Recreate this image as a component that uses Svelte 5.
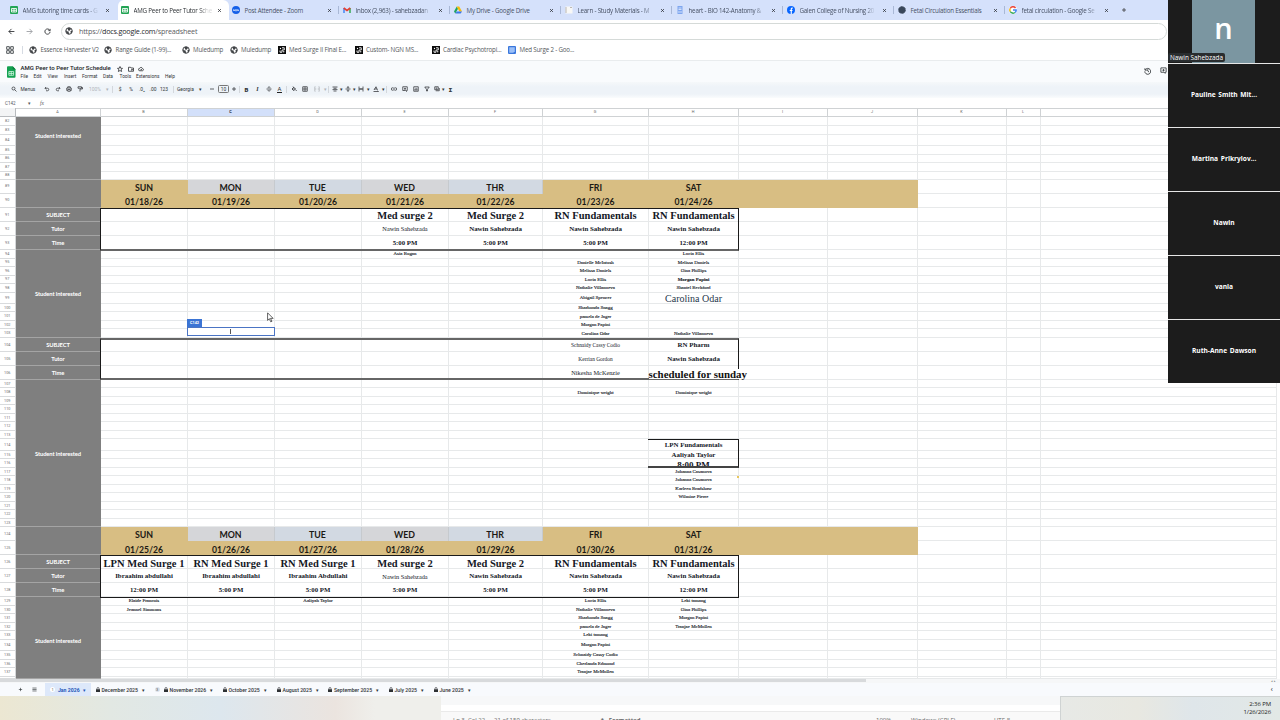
<script lang="ts">
  type Cell = { row: number; col: number; text: string; kind: string };

  const FIRST_ROW = 82;
  const COLUMNS = ['A', 'B', 'C', 'D', 'E', 'F', 'G', 'H', 'I', 'J', 'K', 'L', ''];
  const TALL = [91, 92, 93, 104, 105, 106, 124, 125, 126, 127, 128];
  const MEDIUM = [84, 99, 114, 134];

  const tabs = [
    { icon: 'sheet', title: 'AMG tutoring time cards - G' },
    { icon: 'sheet', title: 'AMG Peer to Peer Tutor Sche' },
    { icon: 'zoom', title: 'Post Attendee - Zoom' },
    { icon: 'gmail', title: 'Inbox (2,963) - sahebzadan' },
    { icon: 'drive', title: 'My Drive - Google Drive' },
    { icon: 'learn', title: 'Learn - Study Materials - M' },
    { icon: 'docblue', title: 'heart - BIO 142-Anatomy &' },
    { icon: 'facebook', title: 'Galen College of Nursing 20' },
    { icon: 'spiky', title: 'Fetal Circulation Essentials' },
    { icon: 'google', title: 'fetal circulation - Google Se' },
  ];

  const bookmarks = [
    { icon: 'globe', title: 'Essence Harvester V2', w: 75 },
    { icon: 'globe', title: 'Range Guide (1-99)...', w: 77.5 },
    { icon: 'globe', title: 'Muledump', w: 48 },
    { icon: 'globe', title: 'Muledump', w: 48 },
    { icon: 'square', title: 'Med Surge II Final E...', w: 77 },
    { icon: 'square', title: 'Custom- NGN MS...', w: 77 },
    { icon: 'square', title: 'Cardiac Psychotropi...', w: 76.5 },
    { icon: 'note', title: 'Med Surge 2 - Goo...', w: 76 },
  ];

  const menus = [
    ['File', 13],
    ['Edit', 14],
    ['View', 16.5],
    ['Insert', 18],
    ['Format', 21],
    ['Data', 16.5],
    ['Tools', 16.5],
    ['Extensions', 29],
    ['Help', 14],
  ] as [string, number][];

  // [type, value, slot width]
  const tools = [
    ['icon', 'search', 12],
    ['text', 'Menus', 16],
    ['gap', '', 5.5],
    ['icon', 'undo', 11],
    ['icon', 'redo', 11],
    ['icon', 'print', 11],
    ['icon', 'paint', 11],
    ['faded', '100%', 19],
    ['faded', '▾', 5],
    ['sep', '', 5],
    ['text', '$', 11],
    ['text', '%', 11],
    ['text', '.0₊', 11],
    ['text', '.00', 11],
    ['text', '123', 11],
    ['sep', '', 7],
    ['text', 'Georgia', 18],
    ['text', '▾', 11],
    ['icon', 'minus', 12],
    ['box', '10', 12],
    ['icon', 'plus', 9],
    ['sep', '', 2.5],
    ['bold', 'B', 11],
    ['italic', 'I', 11],
    ['icon', 'strike', 11],
    ['under', 'A', 11],
    ['sep', '', 3],
    ['icon', 'fill', 11],
    ['icon', 'borders', 12],
    ['iconfaded', 'merge', 12],
    ['faded', '▾', 4],
    ['sep', '', 3],
    ['icon', 'align', 9],
    ['text', '▾', 4],
    ['icon', 'valign', 9],
    ['text', '▾', 4],
    ['icon', 'wrap', 10],
    ['text', '▾', 4],
    ['icon', 'rotate', 11],
    ['text', '▾', 4],
    ['sep', '', 3],
    ['icon', 'link', 11],
    ['icon', 'comment', 11],
    ['icon', 'chart', 11],
    ['icon', 'filter', 11],
    ['icon', 'views', 9],
    ['text', '▾', 4],
    ['bold', 'Σ', 11],
  ] as [string, string, number][];

  const PATHS: Record<string, string> = {
    search: 'M8 5a3 3 0 1 1-6 0a3 3 0 0 1 6 0M7.3 7.3L11 11',
    undo: 'M4 2L2 4.5L4.5 7M2 4.5h5a2.5 2.5 0 0 1 0 5H4',
    redo: 'M8 2l2 2.5L7.500 7M10 4.500H5a2.500 2.500 0 0 0 0 5h3',
    print: 'M3.500 4V1.500h5V4M3 9H1.500V4h9v5H9M3.500 7h5v3.500h-5z',
    paint: 'M2 1.500h7v3H2zM9 3h2v3H6v5',
    minus: 'M2 6h8',
    plus: 'M2 6h8M6 2v8',
    strike: 'M1 6h10M8.500 3.500C8 1 3.500 1.500 4 4M3.500 8c.5 3 5.500 2.500 5-.5',
    fill: 'M4 1l5 5-3.500 3.500L2 6l4-4M2 6h7M10.500 8v2',
    borders: 'M1.500 1.500h9v9h-9zM6 1.500v9M1.500 6h9',
    merge: 'M3 1.500H1.500v9H3M9 1.500h1.500v9H9M1.500 6h3M10.500 6h-3',
    align: 'M1 2h10M3 4.600h6M1 7.200h10M3 10h6',
    valign: 'M1 6h10M6 0v4M4 2.500L6 4.500l2-2M6 12V8M4 9.500L6 7.500l2 2',
    wrap: 'M2 1v10M10 1v10M3 6h6M7 4l2 2-2 2M5 4L3 6l2 2',
    rotate: 'M2 8L6 1.500 9 8M3 6h5M1 11h10M9 9.500l2 1.500',
    link: 'M5 3.500H3a2.500 2.500 0 0 0 0 5h2M7 3.500h2a2.500 2.500 0 0 1 0 5H7M4 6h4',
    comment: 'M1.500 1.500h9V9H9v2L7 9H1.500zM6 3.500v4M4 5.500h4',
    chart: 'M1.500 1.500h9v9h-9zM4 9V6M6 9V3.500M8 9V5',
    filter: 'M1.500 2h9L7 6.500V10H5V6.500z',
    views: 'M1.500 1.500h7v6h-7zM3.500 9.500h7V4M3.500 4h3M3.500 6h3',
    star: 'M6 1l1.500 3.500 3.500.3-2.700 2.400.9 3.800L6 9l-3.200 2 .9-3.800L1 4.800l3.500-.3z',
    folder: 'M1 2.500h4L6 4h5v6.500H1zM6 7.500h3M7.500 6l1.500 1.500L7.500 9',
    cloud: 'M3.500 9.500a2.500 2.500 0 0 1 0-5a3 3 0 0 1 5.500.5a2.300 2.300 0 0 1 0 4.500zM4.500 7l1.200 1.200L8 6',
    back: 'M11 6H1.500M6 1.500L1.500 6 6 10.500',
    forward: 'M1 6h9.500M6 1.500L10.500 6 6 10.500',
    reload: 'M10 4A4.500 4.500 0 1 0 10.500 6.500M10.500 1.500V4.500H7.500',
    history: 'M1.500 2v3h3M2 4.500A4.700 4.700 0 1 1 1.300 7M6 3.500V6.500l2 1.500',
    close: 'M2.500 2.500l7 7M9.500 2.500l-7 7',
    apps: 'M1 1h4v4H1zM7 1h4v4H7zM1 7h4v4H1zM7 7h4v4H7z',
    menu: 'M1 2.500h10M1 6h10M1 9.500h10',
  };

  const height = (row: number) => {
    if (row === 82) return 9;
    if (row === 90) return 14.5;
    if (row === 89) return 13.5;
    if (row === 138) return 1.9;
    if (TALL.includes(row)) return 14;
    if (MEDIUM.includes(row)) return 11.4;
    return 8.5;
  };

  const rows = Array.from({ length: 57 }, (_, i) => FIRST_ROW + i);
  const rowTemplate = '9.2px ' + rows.map((r) => `${height(r)}px`).join(' ');

  // Grid line of a sheet row and column; line 1 holds the headers
  const area = (row: number, col: number, rowSpan = 1, colSpan = 1) =>
    `grid-area: ${row - FIRST_ROW + 2} / ${col + 1} / span ${rowSpan} / span ${colSpan}`;

  const labels = [
    { row: 82, span: 7, text: 'Student interested', kind: 'early' },
    { row: 89, span: 2, text: '' },
    { row: 91, span: 1, text: 'SUBJECT' },
    { row: 92, span: 1, text: 'Tutor' },
    { row: 93, span: 1, text: 'Time' },
    { row: 94, span: 10, text: 'Student interested' },
    { row: 104, span: 1, text: 'SUBJECT' },
    { row: 105, span: 1, text: 'Tutor' },
    { row: 106, span: 1, text: 'Time' },
    { row: 107, span: 17, text: 'Student interested' },
    { row: 124, span: 2, text: '' },
    { row: 126, span: 1, text: 'SUBJECT' },
    { row: 127, span: 1, text: 'Tutor' },
    { row: 128, span: 1, text: 'Time' },
    { row: 129, span: 10, text: 'Student interested', kind: 'late' },
  ];

  const weeks = [
    { row: 89, dates: ['01/18/26', '01/19/26', '01/20/26', '01/21/26', '01/22/26', '01/23/26', '01/24/26'] },
    { row: 124, dates: ['01/25/26', '01/26/26', '01/27/26', '01/28/26', '01/29/26', '01/30/26', '01/31/26'] },
  ];
  const DAYS = ['SUN', 'MON', 'TUE', 'WED', 'THR', 'FRI', 'SAT'];

  const session = (row: number, col: number, subject: string, tutor: string, time: string, tutorKind = 'tutor'): Cell[] => [
    { row, col, text: subject, kind: 'subject' },
    { row: row + 1, col, text: tutor, kind: tutorKind },
    { row: row + 2, col, text: time, kind: 'time' },
  ];

  const names = (row: number, col: number, list: string[]): Cell[] =>
    list.map((text, i) => ({ row: row + i, col, text, kind: 'name' }));

  const cells: Cell[] = [
    ...session(91, 5, 'Med surge 2', 'Nawin Sahebzada', '5:00 PM', 'light'),
    ...session(91, 6, 'Med Surge 2', 'Nawin Sahebzada', '5:00 PM'),
    ...session(91, 7, 'RN Fundamentals', 'Nawin Sahebzada', '5:00 PM'),
    ...session(91, 8, 'RN Fundamentals', 'Nawin Sahebzada', '12:00 PM'),
    ...names(94, 5, ['Asia Bogan']),
    ...names(95, 7, [
      'Danielle McIntosh', 'Melissa Daniels', 'Lucia Ellis', 'Nathalie Villanueva', 'Abigail Spencer',
      'Sharhonda Snagg', 'pamela de Jager', 'Morgan Papini', 'Carolina Odar',
    ]),
    ...names(94, 8, ['Lucia Ellis', 'Melissa Daniels', 'Gina Phillips']),
    { row: 97, col: 8, text: 'Morgan Papini', kind: 'name strong' },
    ...names(98, 8, ['Shantel Beckford']),
    { row: 99, col: 8, text: 'Carolina Odar', kind: 'large' },
    ...names(103, 8, ['Nathalie Villanueva']),
    { row: 104, col: 7, text: 'Schnaidy Cassy Codio', kind: 'mid' },
    { row: 105, col: 7, text: 'Kerrian Gordon', kind: 'mid' },
    { row: 106, col: 7, text: 'Nikesha McKenzie', kind: 'light' },
    { row: 104, col: 8, text: 'RN Pharm', kind: 'tutor' },
    { row: 105, col: 8, text: 'Nawin Sahebzada', kind: 'tutor' },
    { row: 106, col: 8, text: 'scheduled for sunday', kind: 'spill' },
    ...names(108, 7, ['Dominique wright']),
    ...names(108, 8, ['Dominique wright']),
    { row: 114, col: 8, text: 'LPN Fundamentals', kind: 'tutor' },
    { row: 115, col: 8, text: 'Aaliyah Taylor', kind: 'tutor' },
    { row: 116, col: 8, text: '8:00 PM', kind: 'cropped' },
    ...names(117, 8, ['Johanna Casanova', 'Johanna Casanova', 'Karleen Bradshaw', 'Wilmine Pierre']),
    ...session(126, 2, 'LPN Med Surge 1', 'Ibraahim abdullahi', '12:00 PM'),
    ...session(126, 3, 'RN Med Surge 1', 'Ibraahim abdullahi', '5:00 PM'),
    ...session(126, 4, 'RN Med Surge 1', 'Ibraahim Abdullahi', '5:00 PM'),
    ...session(126, 5, 'Med surge 2', 'Nawin Sahebzada', '5:00 PM', 'light'),
    ...session(126, 6, 'Med Surge 2', 'Nawin Sahebzada', '5:00 PM'),
    ...session(126, 7, 'RN Fundamentals', 'Nawin Sahebzada', '5:00 PM'),
    ...session(126, 8, 'RN Fundamentals', 'Nawin Sahebzada', '12:00 PM'),
    ...names(129, 2, ['Elaide Francois', 'Jeannel Simmons']),
    ...names(129, 4, ['Aaliyah Taylor']),
    ...names(129, 7, [
      'Lucia Ellis', 'Nathalie Villanueva', 'Sharhonda Snagg', 'pamela de Jager', 'Leki tamang',
      'Morgan Papini', 'Schnaidy Cassy Codio', 'Cherlanda Edmond', 'Tranjae McMullen',
    ]),
    ...names(129, 8, ['Leki tamang', 'Gina Phillips', 'Morgan Papini', 'Tranjae McMullen']),
  ];

  const sheets = [
    { title: 'December 2025', w: 59 },
    { title: 'November 2026', w: 68, badge: '3' },
    { title: 'October 2025', w: 54 },
    { title: 'August 2025', w: 51.5 },
    { title: 'September 2025', w: 60.5 },
    { title: 'July 2025', w: 45 },
    { title: 'June 2025', w: 45 },
  ];

  const people = ['Pauline Smith Mit...', 'Martina Prikrylov...', 'Nawin', 'vania', 'Ruth-Anne Dawson'];
</script>

{#snippet icon(name: string)}
  <svg class="icon" viewBox="0 0 12 12"><path d={PATHS[name]} /></svg>
{/snippet}

{#snippet logo(name: string)}
  <svg class="logo" viewBox="0 0 16 16">
    {#if name === 'sheet'}
      <rect width="16" height="16" rx="2" fill="#23a455" />
      <path d="M3 5h10v7H3zM3 8.500h10M8 5v7" fill="none" stroke="#fff" stroke-width="1.700" />
    {:else if name === 'zoom'}
      <circle cx="8" cy="8" r="8" fill="#1560e8" />
      <path d="M3 10V7l2 3V7M7 7h2v3H7zM11 10V7l2 3V7" fill="none" stroke="#fff" />
    {:else if name === 'gmail'}
      <path d="M2 14V4" stroke="#4285f4" stroke-width="3" />
      <path d="M14 14V4" stroke="#34a853" stroke-width="3" />
      <path d="M1.500 4L8 9l6.500-5" fill="none" stroke="#e53e30" stroke-width="3.200" />
    {:else if name === 'drive'}
      <path d="M5.500 1L0 11l2.700 4L8 5.500z" fill="#1ea362" />
      <path d="M5.500 1h5L16 11h-5.300z" fill="#fbbc04" />
      <path d="M5.500 11H16l-2.700 4H2.700z" fill="#3b78e7" />
    {:else if name === 'learn'}
      <path d="M1 1h14v14H1z" fill="#f8f8f6" />
      <path d="M2 2v12M10 3h4" stroke="#aaa49c" stroke-width="1.500" />
    {:else if name === 'docblue'}
      <path d="M3 0h10v16H3z" fill="#7ea6ef" />
      <path d="M5 4h6M5 7h6M4 12h8" stroke="#eff4ff" stroke-width="1.500" />
    {:else if name === 'facebook'}
      <circle cx="8" cy="8" r="8" fill="#0866ff" />
      <path d="M8.500 16V6.500c0-2 1-2.500 3-2.300M5.500 9h5.500" fill="none" stroke="#fff" stroke-width="2.300" />
    {:else if name === 'spiky'}
      <circle cx="8" cy="8" r="6.500" fill="#39475a" />
      <circle cx="8" cy="8" r="7" fill="none" stroke="#39475a" stroke-width="2" stroke-dasharray="2 1" />
    {:else if name === 'google'}
      <circle cx="8" cy="8" r="8" fill="#fff" />
      <g fill="none" stroke-width="3">
        <path d="M13 4A6.400 6.400 0 0 0 2.500 5" stroke="#ea4335" />
        <path d="M2.500 5a6.400 6.400 0 0 0 0 6" stroke="#fbbc04" />
        <path d="M2.500 11a6.400 6.400 0 0 0 9.500 2" stroke="#34a853" />
        <path d="M12 13c2-1.500 2.500-3 2.300-5H8" stroke="#4285f4" />
      </g>
    {:else if name === 'globe'}
      <circle cx="8" cy="8" r="6.500" fill="#fff" stroke="#3f4245" stroke-width="2" />
      <path d="M2 6.500l3.500 2.500h2v2.500l1 3-3-.5-3-3zM5 2l4-.5 4 2.500-2.500 1.500L8.500 8 6 6.500zM11 8l3.500-.5-.5 4-2.500 1z" fill="#3f4245" />
    {:else if name === 'square'}
      <path d="M0 0h16v16H0z" fill="#0c0c0c" />
      <path d="M8 3.500h4.500v4.500H8v4.500H4V9" fill="none" stroke="#fff" stroke-width="1.800" />
      <circle cx="11.500" cy="11.500" r="1.300" fill="#fff" />
      <circle cx="5" cy="5" r="1.300" fill="#fff" />
    {:else if name === 'note'}
      <rect width="16" height="16" rx="2" fill="#3a77dc" />
      <path d="M2.500 2.500h11v8l-3 3h-8z" fill="#9cc0f8" />
    {/if}
  </svg>
{/snippet}

<main>
  <div class="tabs">
    {#each tabs as tab, i}
      <div class="tab" class:active={i === 1} class:divided={i > 2}>
        {@render logo(tab.icon)}
        <span class="tab-title" class:long={tab.title.length > 23 && i !== 8}>{tab.title}</span>
        {@render icon('close')}
      </div>
    {/each}
    <div class="new-tab">{@render icon('plus')}</div>
  </div>

  <div class="address">
    {@render icon('back')}
    <span class="dim">{@render icon('forward')}</span>
    {@render icon('reload')}
    <div class="url">{@render logo('globe')}<span>https://<b>docs.google.com</b>/spreadsheet</span></div>
  </div>

  <div class="bookmarks">
    <div class="apps">{@render icon('apps')}</div>
    {#each bookmarks as mark}
      <div class="bookmark" style="width: {mark.w}px">{@render logo(mark.icon)}<span>{mark.title}</span></div>
    {/each}
  </div>

  <header>
    <svg class="sheets-logo" viewBox="0 0 18 24">
      <path d="M2 0h10l6 6v16a2 2 0 0 1-2 2H2a2 2 0 0 1-2-2V2a2 2 0 0 1 2-2z" fill="#12a150" />
      <path d="M12 0l6 6h-6z" fill="#0b7c3c" />
      <path d="M4 11h10v8H4zM4 15h10M9 11v8" fill="none" stroke="#e4fff0" stroke-width="1.500" />
    </svg>
    <div class="heading">
      <div class="doc-title">
        <span>AMG Peer to Peer Tutor Schedule</span>
        {@render icon('star')}
        {@render icon('folder')}
        {@render icon('cloud')}
      </div>
      <div class="menus">
        {#each menus as [menu, w]}
          <span style="width: {w}px">{menu}</span>
        {/each}
      </div>
    </div>
    <div class="history">{@render icon('history')}</div>
    <div class="comments">{@render icon('comment')}</div>
  </header>

  <div class="toolbar">
    {#each tools as [type, value, w]}
      <div class="tool {type}" style="width: {w}px">
        {#if type.startsWith('icon')}
          {@render icon(value)}
        {:else if value}
          <span>{value}</span>
        {/if}
      </div>
    {/each}
  </div>

  <div class="formula"><span>C142</span><span>▾</span><i>fx</i></div>

  <div class="sheet" style="grid-template-rows: {rowTemplate}">
    <div class="corner"></div>
    {#each COLUMNS as name, i}
      <div class="col-head" class:picked={name === 'C'} style={area(81, i + 1)}>{name}</div>
    {/each}

    {#each rows as row}
      <div class="row-head" style={area(row, 0)}>{row < 138 ? row : ''}</div>
      {#each COLUMNS as _, i}
        {#if i > 0}
          <div class="blank" style={area(row, i + 1)}></div>
        {/if}
      {/each}
    {/each}

    {#each labels as label}
      <div class="label {label.kind ?? ''}" style={area(label.row, 1, label.span)}>{label.text}</div>
    {/each}

    {#each weeks as week}
      <div class="band" style={area(week.row, 2, 2, 9)}></div>
      {#each week.dates as date, i}
        <div class="day" class:weekday={i > 0 && i < 5} class:blue={i === 2 || i === 4} style={area(week.row, i + 2)}>
          {DAYS[i]}
        </div>
        <div class="day date" style={area(week.row + 1, i + 2)}>{date}</div>
      {/each}
    {/each}

    <div class="frame first" style={area(91, 2, 3, 7)}></div>
    <div class="frame second" style={area(104, 2, 3, 7)}></div>
    <div class="frame third" style={area(114, 8, 3, 1)}></div>
    <div class="frame" style={area(126, 2, 3, 7)}></div>

    {#each cells as cell}
      <div class="cell {cell.kind}" style={area(cell.row, cell.col)}><span>{cell.text}</span></div>
    {/each}

    <div class="marker" style={area(117, 8)}></div>
    <div class="editing" style={area(103, 3)}>
      <span class="tag">C142</span>
      <span class="caret"></span>
    </div>
  </div>

  <div class="scroll"><div class="thumb"></div><span>◂ ▸</span></div>

  <div class="sheet-tabs">
    <div class="add">{@render icon('plus')}</div>
    <div class="all">{@render icon('menu')}</div>
    <div class="current"><i>1</i><b>Jan 2026</b><span>▾</span></div>
    {#each sheets as sheet}
      <div class="sheet-tab" style="width: {sheet.w}px">
        {#if sheet.badge}<i>{sheet.badge}</i>{/if}
        <svg class="lock" viewBox="0 0 8 10">
          <path d="M2 5V3a2 2 0 0 1 4 0v2" fill="none" stroke="#2d3033" stroke-width="1.300" />
          <path d="M0 4.500h8V10H0z" fill="#2d3033" />
        </svg>
        <span>{sheet.title}</span>
        <span class="arrow">▾</span>
      </div>
    {/each}
    <div class="collapse">‹</div>
  </div>

  <footer>
    <div class="task-left"></div>
    <div class="status">
      <span class="pos">Ln 3, Col 22</span>
      <span class="chars">21 of 159 characters</span>
      <span class="format">⁂ &nbsp;Formatted</span>
      <span class="percent">100%</span>
      <span class="ending">Windows (CRLF)</span>
      <span>UTF-8</span>
    </div>
    <div class="clock"><span>2:36 PM</span><span>1/26/2026</span></div>
  </footer>

  <aside>
    <div class="person speaker">
      <div class="avatar">n</div>
      <span class="speaker-name">Nawin Sahebzada</span>
    </div>
    {#each people as person}
      <div class="person">{person}</div>
    {/each}
  </aside>

  <svg class="pointer" viewBox="0 0 12 18">
    <path d="M1 1v13l3-3 2.500 5.500 2-1L6 10.500h4.500z" fill="#fff" stroke="#333" stroke-width="1.300" />
  </svg>
</main>

<style>
  :global(body) {
    overflow: hidden;
  }

  main {
    position: relative;
    width: 1280px;
    height: 720px;
    overflow: hidden;
    display: flex;
    flex-direction: column;
    background: #fff;
    color: #3c4043;
    font-family: 'Open Sans', 'Noto Sans', sans-serif;
    font-size: 6.2px;
    white-space: nowrap;
  }

  main > * {
    flex-shrink: 0;
    box-sizing: border-box;
  }

  .icon {
    display: block;
    width: 6px;
    height: 6px;
    fill: none;
    stroke: currentColor;
    stroke-width: 1.5;
    flex-shrink: 0;
  }

  .logo {
    display: block;
    width: 8px;
    height: 8px;
    flex-shrink: 0;
  }

  .tabs {
    height: 20px;
    padding-left: 7px;
    display: flex;
    background: #d5e1fb;
    letter-spacing: -0.19px;
  }

  .tab {
    box-sizing: border-box;
    position: relative;
    width: 111px;
    height: 20px;
    padding: 0 7px 0 3px;
    display: flex;
    align-items: center;
    gap: 4.5px;
    color: #465063;
  }

  .tab .icon {
    width: 5px;
    height: 5px;
    color: #30343a;
    stroke-width: 1.9;
    margin-right: 1px;
  }

  .tab-title {
    flex: 1;
  }

  .long {
    mask-image: linear-gradient(to right, #000 84%, rgba(0, 0, 0, 0.2) 94%);
  }

  .tab.active {
    background: #fff;
    border-radius: 6px 6px 0 0;
    color: #2c3034;
  }

  .divided::before {
    content: '';
    position: absolute;
    left: -2px;
    top: 6px;
    width: 1px;
    height: 8px;
    background: #a9b8d6;
  }

  .new-tab {
    padding: 7px 4px;
    color: #333;
  }

  .address {
    height: 22px;
    padding-left: 8px;
    display: flex;
    align-items: center;
    gap: 11px;
    color: #303236;
  }

  .address .icon {
    width: 7px;
    height: 7px;
  }

  .dim {
    color: #9a9da1;
  }

  .url {
    box-sizing: border-box;
    width: 1106px;
    height: 17px;
    margin-left: -1px;
    padding-left: 3px;
    border: 1px solid #d5dad8;
    border-radius: 9px;
    display: flex;
    align-items: center;
    gap: 6px;
    font-size: 7.2px;
    letter-spacing: -0.19px;
    color: #5c6064;
  }

  .url b {
    font-weight: 500;
    color: #25282b;
  }

  .bookmarks {
    height: 19px;
    padding: 0 0 3px 6px;
    display: flex;
    align-items: center;
    border-bottom: 1px solid #e9ecee;
    color: #54585c;
    letter-spacing: -0.17px;
  }

  .apps {
    box-sizing: border-box;
    width: 17px;
    height: 8px;
    margin-right: 6px;
    border-right: 1px solid #d6dbe3;
  }

  .apps .icon {
    width: 8px;
    height: 8px;
  }

  .bookmark {
    display: flex;
    align-items: center;
    gap: 3.5px;
  }

  header {
    height: 21px;
    padding: 4px 0 0 7px;
    display: flex;
    background: #f9fbfd;
    font-family: Roboto, sans-serif;
  }

  .sheets-logo {
    width: 8.5px;
    height: 12px;
    margin: 0.5px 5px 0 0;
  }

  .heading {
    width: 1123px;
  }

  .doc-title {
    height: 7px;
    display: flex;
    align-items: center;
    gap: 4.5px;
    font-size: 6.05px;
    color: #202326;
  }

  .doc-title span {
    width: 91px;
    line-height: 6px;
    margin-top: -1px;
    font-weight: 500;
  }

  .doc-title span + .icon {
    margin-left: 1px;
  }

  .menus {
    display: flex;
    padding-top: 1px;
    font-size: 4.8px;
    line-height: 7px;
    color: #303236;
  }

  .history .icon {
    width: 7.5px;
    height: 7.5px;
    margin-top: 2px;
  }

  .comments .icon {
    width: 7px;
    height: 7px;
    margin: 2px 0 0 9px;
  }

  .toolbar {
    height: 16px;
    padding: 0 0 1.5px 8px;
    display: flex;
    align-items: center;
    background: linear-gradient(#f5f8fa, #eef3f8 30%, #eef3f8 75%, #fafcfd);
    font-family: Roboto, sans-serif;
    font-size: 4.9px;
    color: #303337;
  }

  .tool {
    display: flex;
    align-items: center;
    justify-content: center;
  }

  .tool .icon {
    width: 6px;
    height: 6px;
  }

  .faded,
  .iconfaded {
    color: #b0b4b8;
  }

  .sep::after {
    content: '';
    width: 1px;
    height: 7px;
    background: #d3d7dc;
  }

  .box span {
    padding: 0 2px;
    border: 1px solid #777;
    border-radius: 1.5px;
    line-height: 6px;
  }

  .bold {
    font-weight: 900;
    font-size: 6px;
  }

  .italic {
    font: italic bold 6px 'Liberation Serif', serif;
  }

  .under span {
    padding: 0 1px;
    font-size: 6px;
    line-height: 6px;
    border-bottom: 1px solid #222;
  }

  .formula {
    height: 10px;
    padding-left: 5px;
    display: flex;
    align-items: center;
    font: 4.5px Roboto, sans-serif;
    color: #55595d;
  }

  .formula span:first-child {
    width: 23px;
  }

  .formula i {
    margin-left: 9px;
    font-family: 'Liberation Serif', serif;
    font-size: 5.5px;
  }

  .sheet {
    height: 571px;
    overflow: hidden;
    display: grid;
    grid-template-columns: 15.5px 85px 87px 87px 87px 87px 94px 106px 90px 89px 90px 89px 34px 236px;
    font-family: 'Liberation Serif', serif;
    color: #14181f;
  }

  .sheet > div {
    box-sizing: border-box;
    min-width: 0;
    min-height: 0;
  }

  .corner {
    background: #f3f4f5;
    border-right: 1px solid #b8bbbe;
    border-bottom: 1px solid #b8bbbe;
  }

  .col-head {
    border: solid #cfd2d4;
    border-width: 1px 1px 1px 0;
    font: 3.8px/6px Roboto, sans-serif;
    text-align: center;
    color: #666;
  }

  .picked {
    background: #d3e0fa;
    font-weight: bold;
    color: #223;
  }

  .row-head {
    display: flex;
    align-items: center;
    justify-content: center;
    border-right: 1px solid #d5d7d9;
    border-bottom: 1px solid #d9dbdd;
    font: 3.8px/1 Roboto, sans-serif;
    color: #6b6e71;
  }

  .blank {
    border-right: 1px solid #e7e9ea;
    border-bottom: 1px solid #e7e9ea;
  }

  .label {
    display: flex;
    align-items: center;
    justify-content: center;
    background: #7f7f7f;
    border-bottom: 1px solid #a4a4a4;
    font: bold 5.8px Lato, sans-serif;
    letter-spacing: -0.1px;
    color: #fff;
  }

  .early {
    padding-bottom: 25px;
  }

  .late {
    padding-top: 5px;
  }

  .band {
    background: #d8be83;
  }

  .day {
    display: flex;
    align-items: center;
    justify-content: center;
    padding-top: 3px;
    font: bold 8.8px/1 Lato, sans-serif;
    color: #1b1914;
  }

  .date {
    font-size: 8.6px;
  }

  .weekday {
    background: #d5d6d9;
    border-right: 1px solid #c6cace;
  }

  .weekday.blue {
    background: #d2d9e2;
  }

  .frame {
    z-index: 1;
    border: 1.5px solid #1a1a1a;
    margin: 0 0 -0.5px -0.5px;
  }

  .first {
    border-bottom: 2px solid #666;
  }

  .second {
    border-top: 2px solid #666;
    border-bottom: 2px solid #666;
  }

  .third {
    border-left: 0;
    border-bottom: 2px solid #444;
  }

  .cell {
    display: flex;
    align-items: center;
    justify-content: center;
    line-height: 1;
  }

  .subject {
    padding-top: 3px;
    font-size: 10.5px;
    font-weight: bold;
  }

  .tutor {
    font-size: 6.9px;
    font-weight: bold;
    padding-top: 1px;
  }

  .time {
    padding-top: 1px;
    font-size: 6.8px;
    font-weight: bold;
  }

  .light {
    font-size: 6.3px;
    padding-top: 1px;
  }

  .mid {
    padding-top: 1px;
    font-size: 5.4px;
  }

  .name {
    padding-top: 0.5px;
    font-size: 4.9px;
    -webkit-text-stroke: 0.12px currentColor;
  }

  .strong {
    font-weight: bold;
  }

  .large {
    padding-top: 2px;
    font-size: 10px;
    color: #27374b;
  }

  .spill {
    z-index: 2;
    justify-content: flex-start;
    padding-top: 2px;
    font-size: 10.9px;
    font-weight: bold;
    color: #111;
  }

  .spill span {
    background: #fff;
    line-height: 10px;
  }

  .cropped {
    padding-top: 3px;
    font-size: 9px;
    font-weight: bold;
  }

  .marker {
    justify-self: end;
    width: 2px;
    height: 2px;
    margin-top: 8px;
    background: #e8c65c;
  }

  .editing {
    position: relative;
    z-index: 3;
    margin: -2px 0 2px -0.5px;
    border: 1px solid #4a74c4;
    background: #fff;
  }

  .tag {
    position: absolute;
    left: -1px;
    bottom: 8px;
    padding: 0 3px;
    background: #3b74d4;
    color: #fff;
    font: bold 3.8px/8px Roboto, sans-serif;
  }

  .caret {
    display: block;
    width: 1px;
    height: 5px;
    margin: 0.5px auto;
    background: #555;
  }

  .scroll {
    height: 4px;
    display: flex;
    justify-content: space-between;
    background: #f6f7f8;
    font-size: 3px;
    line-height: 4px;
    color: #777;
  }

  .scroll span {
    padding-right: 4px;
  }

  .thumb {
    width: 866px;
    height: 3px;
    background: #d8dadc;
  }

  .sheet-tabs {
    height: 13px;
    padding-left: 18px;
    display: flex;
    align-items: stretch;
    background: #f8fafd;
    font-family: Roboto, sans-serif;
    font-size: 5.15px;
    color: #2f3336;
  }

  .sheet-tabs > div {
    display: flex;
    align-items: center;
  }

  .sheet-tabs .icon {
    width: 5px;
    height: 5px;
  }

  .add {
    width: 13.5px;
  }

  .all {
    width: 13.5px;
  }

  .current {
    box-sizing: border-box;
    width: 45.5px;
    padding-left: 5px;
    gap: 3px;
    background: #dde8fa;
    color: #2456b8;
  }

  .sheet-tabs i {
    width: 5px;
    height: 5px;
    border-radius: 50%;
    background: #fff;
    font-size: 4px;
    line-height: 5px;
    font-style: normal;
    text-align: center;
    color: #555;
  }

  .sheet-tab {
    gap: 2px;
  }

  .current + .sheet-tab {
    margin-left: 5px;
  }

  .sheet-tab span:not(.arrow) {
    font-weight: 500;
  }

  .sheet-tab i {
    background: #dbe1ea;
    margin-right: 2px;
  }

  .lock {
    width: 4px;
    height: 5px;
  }

  .arrow {
    margin-left: 2px;
  }

  .collapse {
    margin-left: auto;
    padding-right: 7px;
    font-size: 8px;
  }

  footer {
    height: 24px;
    display: flex;
    color: #333;
  }

  .task-left {
    width: 441px;
    background: linear-gradient(to right, #ece7d2, #e2e8e3 25%, #dde7ee 50%, #ebe4df 76%, #efefeb 85%);
  }

  .status {
    box-sizing: border-box;
    width: 619px;
    height: 9px;
    margin-top: 15px;
    padding: 4px 0 0 12px;
    display: flex;
    border-top: 1px solid #eaeaea;
    background: #f9f9f9;
    box-shadow: 0 -15px #f7f8f9;
    font-size: 6px;
    line-height: 9px;
    color: #6a6a6a;
  }

  .pos {
    width: 41px;
  }

  .chars {
    width: 105px;
  }

  .format {
    width: 277px;
    font-weight: bold;
  }

  .percent {
    width: 35px;
  }

  .ending {
    width: 83px;
  }

  .clock {
    box-sizing: border-box;
    flex: 1;
    padding: 3px 9px 0 0;
    border-top: 1px solid #cfd3d3;
    border-left: 1px solid #cfd3d3;
    display: flex;
    flex-direction: column;
    align-items: flex-end;
    background: linear-gradient(to right, #e7e9e6, #e8e8e1 35%, #dfe6ea 60%, #e2e8e6);
    font-size: 6px;
    line-height: 8px;
    letter-spacing: -0.1px;
    color: #222;
  }

  /* Call participants floating over the browser */
  aside {
    position: absolute;
    top: 0;
    right: 0;
    z-index: 5;
    width: 112px;
    display: flex;
    flex-direction: column;
    gap: 1px;
    background: #e6e6e6;
  }

  .person {
    box-sizing: border-box;
    height: 63px;
    padding-bottom: 2px;
    display: flex;
    align-items: center;
    justify-content: center;
    background: #1c1c1c;
    color: #fff;
    font-size: 6.6px;
    font-weight: bold;
    word-spacing: 1px;
  }

  .speaker {
    position: relative;
    padding: 0 1px 0 0;
  }

  .avatar {
    width: 63px;
    height: 63px;
    background: #7b96a1;
    font-size: 29px;
    font-weight: 600;
    line-height: 56px;
    text-align: center;
  }

  .speaker-name {
    position: absolute;
    left: 0;
    bottom: 1px;
    padding: 0 2px;
    border-radius: 2px;
    background: #292d2f;
    font-size: 6.4px;
    font-weight: normal;
    line-height: 9px;
    word-spacing: 0;
  }

  .pointer {
    position: absolute;
    z-index: 4;
    left: 267px;
    top: 312px;
    width: 7px;
    height: 11px;
  }
</style>
